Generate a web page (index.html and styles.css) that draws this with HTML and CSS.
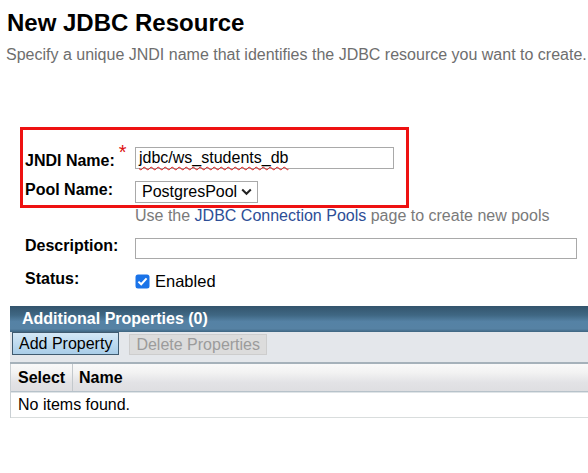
FILE: index.html
```html
<!DOCTYPE html>
<html lang="en">
<head>
<meta charset="utf-8">
<title>New JDBC Resource</title>
<link rel="stylesheet" href="styles.css">
</head>
<body>
<div class="page">
  <h1 class="title">New JDBC Resource</h1>
  <p class="subtitle">Specify a unique JNDI name that identifies the JDBC resource you want to create.</p>

  <div class="highlight">
    <div class="row row-jndi">
      <div class="label">JNDI Name:<span class="req">*</span></div>
      <div class="field field-text"><span class="spell">jdbc/ws_students_db</span></div>
    </div>
    <div class="row row-pool">
      <div class="label">Pool Name:</div>
      <div class="field field-select">
        <span>PostgresPool</span>
        <svg class="chev" width="11" height="8" viewBox="0 0 11 8"><path d="M1.2 1.5 L5.5 5.8 L9.8 1.5" fill="none" stroke="#222" stroke-width="2"/></svg>
      </div>
    </div>
  </div>
  <p class="hint">Use the <span class="link">JDBC Connection Pools</span> page to create new pools</p>

  <div class="row row-desc">
    <div class="label">Description:</div>
    <div class="field field-wide"></div>
  </div>
  <div class="row row-status">
    <div class="label">Status:</div>
    <div class="check">
      <svg class="box" width="15" height="15" viewBox="0 0 15 15"><rect x="0.5" y="0.5" width="14" height="14" rx="2.5" fill="#1a73e8"/><path d="M3.4 7.6 L6.2 10.3 L11.6 4.4" fill="none" stroke="#fff" stroke-width="2"/></svg>
      <span>Enabled</span>
    </div>
  </div>

  <div class="props">
    <div class="props-head">Additional Properties (0)</div>
    <div class="props-actions">
      <span class="btn btn-primary">Add Property</span>
      <span class="btn btn-disabled">Delete Properties</span>
    </div>
    <div class="props-table">
      <div class="thead">
        <div class="th th-select">Select</div>
        <div class="th th-name">Name</div>
      </div>
      <div class="empty">No items found.</div>
    </div>
  </div>
</div>
</body>
</html>
```
FILE: styles.css
```css
html, body {
  margin: 0;
  padding: 0;
  background: #ffffff;
  overflow: hidden;
}
body {
  font-family: "Liberation Sans", Arial, sans-serif;
  font-size: 16px;
  color: #000;
}
.page {
  width: 588px;
}
.title {
  margin: 0;
  padding: 9px 0 0 7px;
  font-size: 24px;
  line-height: 28px;
  font-weight: bold;
}
.subtitle {
  margin: 9px 0 0 6px;
  font-size: 16px;
  line-height: 18px;
  color: #6e6e6e;
  white-space: nowrap;
}
.highlight {
  margin: 63px 0 0 20px;
  width: 381px;
  border: 3px solid #ee1111;
  padding: 17px 0 2px 2px;
  display: flex;
  flex-direction: column;
  gap: 11px;
}
.row {
  display: grid;
  grid-template-columns: 110px auto;
  align-items: start;
}
.label {
  font-weight: bold;
  line-height: 18px;
  white-space: nowrap;
}
.row-jndi .label { padding-top: 3px; }
.row-pool .label { padding-top: 0; }
.req {
  color: #dd1111;
  font-size: 20px;
  font-weight: normal;
  margin-left: 4px;
  position: relative;
  top: -7px;
}
.field {
  box-sizing: border-box;
  height: 22px;
  border: 1px solid #a9a9a9;
  background: #fff;
  line-height: 20px;
}
.field-text {
  width: 259px;
  padding-left: 3px;
}
.spell {
  text-decoration: underline wavy #e01010;
  text-decoration-skip-ink: none;
  text-underline-offset: 3px;
  text-decoration-thickness: 1px;
}
.field-select {
  width: 123px;
  padding: 0 5px 0 6px;
  display: flex;
  align-items: center;
  justify-content: space-between;
}
.chev { display: block; }
.hint {
  margin: 0 0 0 135px;
  line-height: 16px;
  color: #7a7a7a;
  white-space: nowrap;
}
.link { color: #2d4e97; }
.row-desc {
  margin: 14px 0 0 25px;
}
.row-desc .label { margin-top: -1px; }
.field-wide {
  width: 442px;
  height: 21px;
}
.row-status {
  margin: 11px 0 0 25px;
}
.check {
  display: flex;
  align-items: center;
  gap: 5px;
  line-height: 18px;
  padding-top: 2px;
}
.check span { font-size: 16.5px; }
.box { display: block; }
.props {
  margin: 16px 0 0 10px;
  width: 600px;
}
.props-head {
  height: 26px;
  line-height: 26px;
  padding-left: 12px;
  color: #fff;
  font-weight: bold;
  background: linear-gradient(#33546c 0%, #3f6783 35%, #5582a5 60%, #5682a4 88%, #3e6580 100%);
}
.props-actions {
  height: 30px;
  background: #e4e7eb;
  border-bottom: 2px solid #a5b1ba;
  display: flex;
  align-items: flex-start;
  gap: 10px;
  padding-left: 2px;
}
.btn {
  box-sizing: border-box;
  height: 23px;
  line-height: 21px;
  padding: 0 6px;
  white-space: nowrap;
}
.btn-primary {
  border: 1px solid #405b70;
  background: linear-gradient(#d4e8f6, #a9cde8);
  color: #000;
}
.btn-disabled {
  margin-top: 2px;
  height: 21px;
  line-height: 19px;
  border: 1px solid #cdcdcd;
  background: #dcdcdc;
  color: #9b9b9b;
}
.props-table {
  border-left: 1px solid #c9cfd3;
}
.thead {
  display: flex;
  height: 27px;
  line-height: 27px;
  font-weight: bold;
  background: linear-gradient(#f9f9f9 0%, #f3f3f3 30%, #e2e2e5 70%, #dedee1 100%);
  border-bottom: 1px solid #b7c2ca;
}
.th-select {
  width: 54px;
  padding-left: 7px;
  border-right: 1px solid #c3c8cc;
}
.th-name {
  padding-left: 6px;
}
.empty {
  border-top: 1px solid #dfe4e7;
  height: 24px;
  line-height: 24px;
  padding-left: 7px;
  border-bottom: 1px solid #d9dddd;
}
```
